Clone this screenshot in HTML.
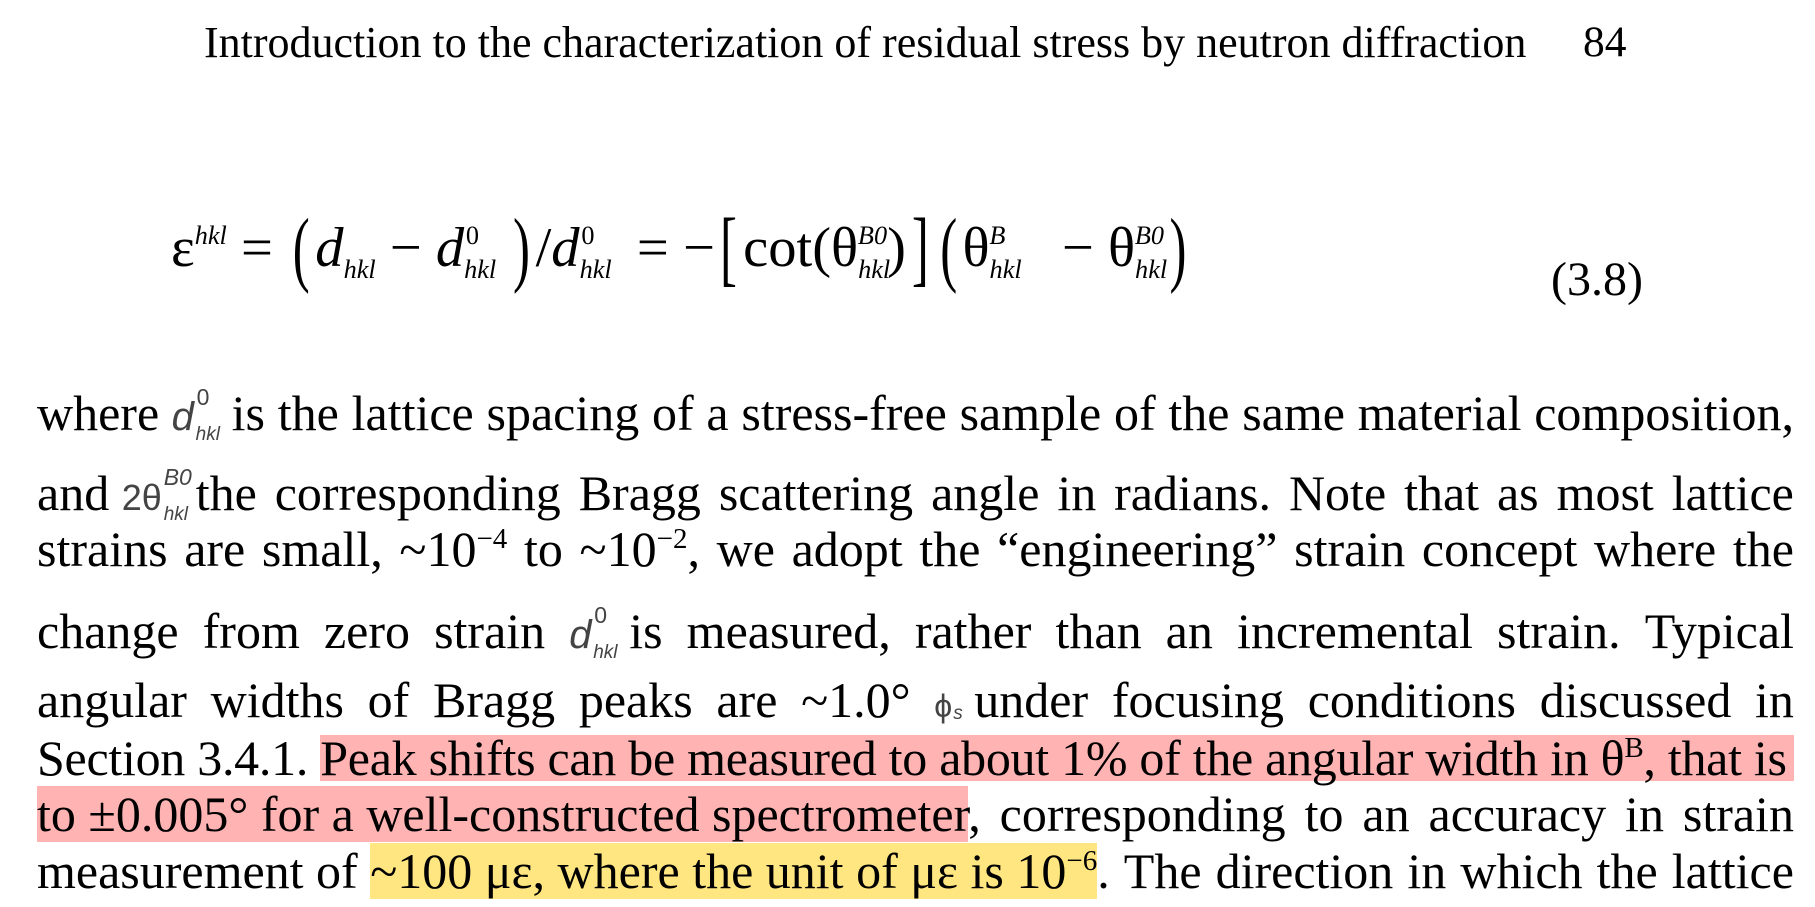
<!DOCTYPE html>
<html><head><meta charset="utf-8"><style>
body{margin:0;width:1815px;height:907px;background:#fff;overflow:hidden;position:relative;font-family:"Liberation Serif",serif;color:#000}
.l{position:absolute;left:37px;width:1757px;font-size:50px;line-height:46px;white-space:nowrap;display:flex;justify-content:space-between}
.l span{white-space:pre}
.p{background:#ffb3b3}
.y{background:#ffe680}
sup{font-size:29px;vertical-align:18px;line-height:0}
.im{font-family:"Liberation Sans",sans-serif;color:#444;position:relative;display:inline-block}
.im i{font-size:40px}
.im .s{position:absolute;font-size:19px;font-style:italic;left:24px;top:22px}
.im .t{position:absolute;font-size:23px;left:25px;top:-16px}
.eq{position:absolute;left:171px;top:200px;font-size:56px;white-space:nowrap;font-family:"Liberation Serif",serif;transform:scaleX(1.01);transform-origin:left}
.eq sub{font-size:26px;font-style:italic;vertical-align:-12px}
.eq .u{font-size:26px;vertical-align:22px}
.big{font-size:84px;vertical-align:-10px;font-weight:100;display:inline-block;transform:scaleX(0.6)}
</style></head><body>
<div style="position:absolute;left:204px;top:17px;font-size:44px;white-space:nowrap">Introduction to the characterization of residual stress by neutron diffraction</div>
<div style="position:absolute;left:1583px;top:17px;font-size:43.5px">84</div>
<div class="eq">ε<span class="u"><i>hkl</i></span> = <span class="big">(</span><i>d</i><sub>hkl</sub> − <i>d</i><sub>hkl</sub><span class="u" style="margin-left:-30px">0</span>&nbsp;&nbsp;<span class="big">)</span>/<i>d</i><sub>hkl</sub><span class="u" style="margin-left:-30px">0</span>&nbsp;&nbsp; = −<span class="big">[</span>cot(θ<sub>hkl</sub><span class="u" style="margin-left:-32px;font-style:italic">B0</span>)<span class="big">]</span><span class="big">(</span>θ<sub>hkl</sub><span class="u" style="margin-left:-32px;font-style:italic">B</span>&nbsp;&nbsp;&nbsp; − θ<sub>hkl</sub><span class="u" style="margin-left:-32px;font-style:italic">B0</span><span class="big">)</span></div>
<div style="position:absolute;left:1551px;top:252px;font-size:48px">(3.8)</div>

<div class="l" style="top:390px"><span>where <span class="im" style="width:60px"><i>d</i><span class="t">0</span><span class="s">hkl</span></span>is</span><span>the</span><span>lattice</span><span>spacing</span><span>of</span><span>a</span><span>stress-free</span><span>sample</span><span>of</span><span>the</span><span>same</span><span>material</span><span>composition,</span></div>
<div class="l" style="top:470px"><span>and <span class="im" style="width:74px"><span style="font-size:36px">2θ</span><span class="t" style="left:42px;font-style:italic">B0</span><span class="s" style="left:42px">hkl</span></span>the</span><span>corresponding</span><span>Bragg</span><span>scattering</span><span>angle</span><span>in</span><span>radians.</span><span>Note</span><span>that</span><span>as</span><span>most</span><span>lattice</span></div>
<div class="l" style="top:526px"><span>strains</span><span>are</span><span>small,</span><span>~10<sup>−4</sup></span><span>to</span><span>~10<sup>−2</sup>,</span><span>we</span><span>adopt</span><span>the</span><span>“engineering”</span><span>strain</span><span>concept</span><span>where</span><span>the</span></div>
<div class="l" style="top:608px"><span>change</span><span>from</span><span>zero</span><span>strain</span><span><span class="im" style="width:60px"><i>d</i><span class="t">0</span><span class="s">hkl</span></span>is</span><span>measured,</span><span>rather</span><span>than</span><span>an</span><span>incremental</span><span>strain.</span><span>Typical</span></div>
<div class="l" style="top:677px"><span>angular</span><span>widths</span><span>of</span><span>Bragg</span><span>peaks</span><span>are</span><span>~1.0°</span><span><span class="im" style="width:40px"><span style="font-size:32px">ϕ</span><span class="s" style="left:19px;top:14px">s</span></span>under</span><span>focusing</span><span>conditions</span><span>discussed</span><span>in</span></div>
<div class="l" style="top:735px;letter-spacing:-0.28px"><span>Section 3.4.1. </span><span class="p" style="flex:1;display:flex;justify-content:space-between"><span>Peak shifts can be measured to about 1% of the angular width in θ<sup>B</sup>, that is</span></span></div>
<div class="l" style="top:791px"><span><span class="p">to ±0.005° for a well-constructed spectrometer</span>,</span><span>corresponding</span><span>to</span><span>an</span><span>accuracy</span><span>in</span><span>strain</span></div>
<div class="l" style="top:848px"><span>measurement of <span class="y">~100 με, where the unit of με is 10<sup>−6</sup></span>.</span><span>The</span><span>direction</span><span>in</span><span>which</span><span>the</span><span>lattice</span></div>
</body></html>
